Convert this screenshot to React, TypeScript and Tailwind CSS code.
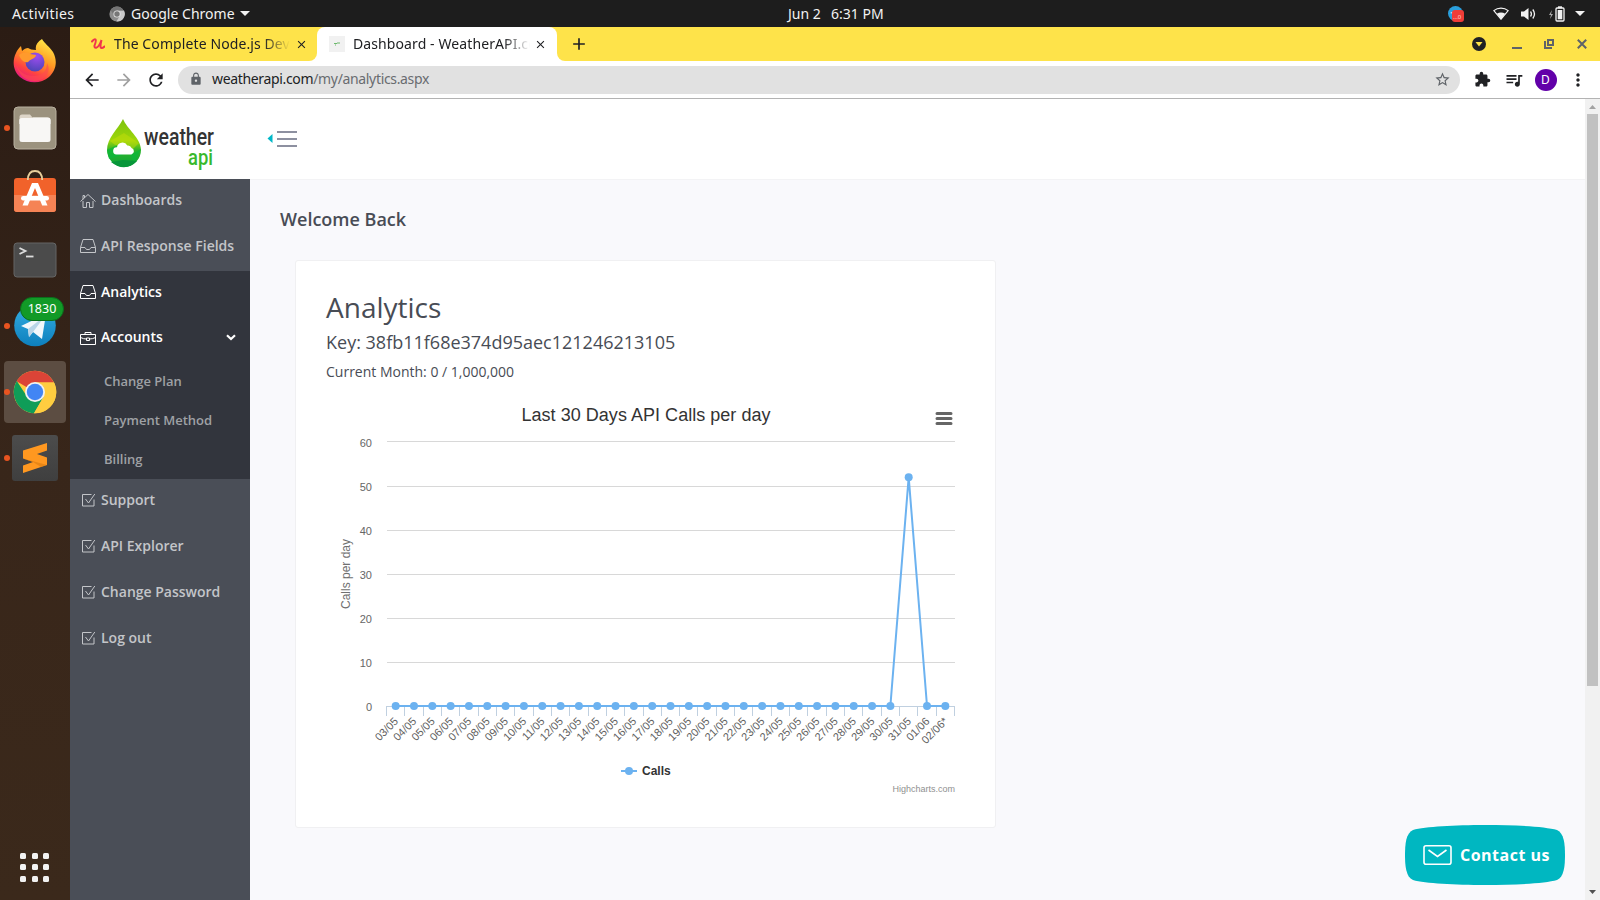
import type { ReactNode } from "react";
import {
  MdArrowBack,
  MdArrowForward,
  MdRefresh,
  MdLock,
  MdStarBorder,
  MdExtension,
  MdQueueMusic,
  MdMoreVert,
  MdClose,
  MdAdd,
} from "react-icons/md";

const ui = "font-['Noto_Sans',sans-serif]";

/* ---------- desktop top bar ---------- */

function TopBar() {
  return (
    <header className={`flex h-[27px] shrink-0 items-center bg-[#1d1d1d] text-[14px] text-[#f2f2f2] ${ui}`}>
      <div className="w-[109px] pl-3 tracking-[0.4px]">Activities</div>
      <svg width="16" height="16" viewBox="0 0 16 16">
        <circle cx="8" cy="8" r="7.6" fill="#8d8d8d" />
        <path d="M8 4.5h7a7.6 7.6 0 0 1-7.6 11L11 9.6z" fill="#c9c9c9" />
        <path d="M1.6 4A7.6 7.6 0 0 1 14.6 4.4H8L5 9.6z" fill="#747474" />
        <circle cx="8" cy="8" r="3.6" fill="#e4e4e4" />
        <circle cx="8" cy="8" r="2.7" fill="#777" />
      </svg>
      <div className="w-[115px] pl-[6px] tracking-[0.02px] whitespace-nowrap">Google Chrome</div>
      <svg width="10" height="5" viewBox="0 0 10 5" className="shrink-0">
        <path d="M0 0h10L5 5z" fill="#f2f2f2" />
      </svg>
      <div className="ml-[538px] w-[43px] whitespace-nowrap tracking-[0px]">Jun 2</div>
      <div className="w-[60px] whitespace-nowrap tracking-[0px]">6:31 PM</div>
      <div className="ml-auto flex items-center pr-[15px]">
        <svg width="16" height="16" viewBox="0 0 16 16" className="mr-[29px]">
          <circle cx="7.5" cy="7.5" r="7.5" fill="#2a9fdc" />
          <path d="M2 7l5-2v3z" fill="#fff" />
          <rect x="4" y="4" width="12" height="12" rx="3" fill="#f03d37" />
          <text x="5" y="13" fontSize="6" fill="#ffd0cc" fontFamily="Noto Sans, sans-serif">...0</text>
        </svg>
        <svg width="16" height="13" viewBox="0 0 16 13" className="mr-[12px]">
          <path d="M.8 3.6C5 .3 11 .3 15.200 3.600L8 12.200z" fill="none" stroke="#f2f2f2" strokeWidth="1.200" />
          <path d="M3.800 6.700c2.500-1.600 5.900-1.600 8.400 0L8 12z" fill="#f2f2f2" />
        </svg>
        <svg width="16" height="14" viewBox="0 0 16 14" className="mr-[12px]">
          <path d="M0 4.500h3L7.500 1v12L3 9.500H0z" fill="#f2f2f2" />
          <path d="M9.500 4.500q1.800 2.500 0 5M11.800 2.500q3.400 4.500 0 9" fill="none" stroke="#f2f2f2" strokeWidth="1.300" />
        </svg>
        <svg width="16" height="16" viewBox="0 0 16 16" className="mr-[10px]">
          <path d="M3 4L0 9h2l-1 4 3-5H2z" fill="#aaa" />
          <rect x="7" y="2" width="8" height="13" rx="1" fill="none" stroke="#f2f2f2" strokeWidth="1.300" />
          <rect x="9" y="0.300" width="4" height="2" fill="#f2f2f2" />
          <rect x="8.700" y="4" width="4.600" height="9.300" fill="#f2f2f2" />
        </svg>
        <svg width="10" height="5" viewBox="0 0 10 5">
          <path d="M0 0h10L5 5z" fill="#f2f2f2" />
        </svg>
      </div>
    </header>
  );
}

/* ---------- dock ---------- */

function DockSlot({ className, running, children }: { className: string; running?: boolean; children: ReactNode }) {
  return (
    <div className={`relative flex w-[70px] shrink-0 items-center justify-center ${className}`}>
      {running && <span className="absolute left-[4px] top-1/2 -mt-[3px] size-[6px] rounded-full bg-[#e95420]" />}
      {children}
    </div>
  );
}

function Dock() {
  return (
    <aside className="flex w-[70px] shrink-0 flex-col bg-linear-to-b from-[#2b1c14] via-[#38261a] to-[#3b291b]">
      <DockSlot className="h-[68px]">
        <svg width="44" height="46" viewBox="0 0 44 46">
          <defs>
            <linearGradient id="fx" x1="0.800" y1="0" x2="0.300" y2="1">
              <stop offset="0" stopColor="#fff04a" />
              <stop offset="0.450" stopColor="#ff9a23" />
              <stop offset="0.750" stopColor="#ff4440" />
              <stop offset="1" stopColor="#e31587" />
            </linearGradient>
            <radialGradient id="fxp" cx="0.600" cy="0.200" r="0.800">
              <stop offset="0" stopColor="#a04df0" />
              <stop offset="1" stopColor="#4f45b8" />
            </radialGradient>
          </defs>
          <path d="M29 1c2 4 8 8 11 13 5 9 3 19-4 25-8 7-21 7-29 0-7-6-8-16-4-24 1-3 3-5 5-7l1 5c2-2 4-3 6-3 2 1 4 2 8 2-1-4 1-8 6-11z" fill="url(#fx)" />
          <circle cx="22" cy="24" r="9.500" fill="url(#fxp)" />
          <path d="M6 17c4-3 8-3 11-1l6 1c0 3-5 4-7 6-1 2-3 1-4 1-3-1-5-4-6-7z" fill="#ff9a2c" />
          <path d="M3 24c2 10 9 14 18 14 8 0 13-5 13-13 5 9-2 18-13 18C11 43 4 35 3 24z" fill="#ff4a50" opacity="0.600" />
        </svg>
      </DockSlot>
      <DockSlot className="h-[66px]" running>
        <svg width="44" height="44" viewBox="0 0 44 44">
          <rect x="1" y="1" width="42" height="42" rx="4" fill="#9b927e" stroke="#b8b09f" />
          <path d="M6.500 11q0-2.500 2.500-2.500h8l2.500 3H34q3 0 3 3V18H6.500z" fill="#ddd5c8" />
          <rect x="6.500" y="12" width="31" height="24" rx="2.500" fill="#f8f7f5" />
          <path d="M6.500 13.500q0-1 2-1h8.500q2 0 3-1h15q2.500 0 2.500 2.500v4h-31z" fill="#f8f7f5" />
        </svg>
      </DockSlot>
      <DockSlot className="h-[66px]">
        <svg width="44" height="52" viewBox="0 0 44 52" className="-mt-[5px]">
          <rect x="1" y="12" width="42" height="34" rx="3" fill="#f1622b" />
          <path d="M1 29h42v14q0 3-3 3H4q-3 0-3-3z" fill="#f58355" />
          <path d="M14.800 14C15 8.500 17 5 22 5S29 8.500 29.200 14" fill="none" stroke="#e9cf9c" strokeWidth="1.800" />
          <path d="M19 17h6l9.500 22.500h-5.300L22 22l-7.200 17.500H9.500z" fill="#fff" />
          <rect x="8" y="30" width="28" height="4.500" rx="2.200" fill="#fff" />
        </svg>
      </DockSlot>
      <DockSlot className="h-[66px]">
        <svg width="44" height="36" viewBox="0 0 44 36">
          <rect x="1" y="1" width="42" height="34" rx="3" fill="#4b4b4b" stroke="#656565" />
          <path d="M6.500 6l6 3-6 3" fill="none" stroke="#ddd" strokeWidth="1.800" />
          <path d="M13 14.500h7.500" stroke="#ddd" strokeWidth="1.800" />
        </svg>
      </DockSlot>
      <DockSlot className="h-[66px]" running>
        <svg width="44" height="44" viewBox="0 0 44 44">
          <defs>
            <linearGradient id="tg" x1="0" y1="0" x2="0" y2="1">
              <stop offset="0" stopColor="#35aee2" />
              <stop offset="1" stopColor="#0d7fbd" />
            </linearGradient>
          </defs>
          <circle cx="22" cy="21.500" r="20.800" fill="url(#tg)" />
          <path d="M8 22L33 10l-4 25-9-7-4 5-1-8z" fill="#f2f7fb" />
          <path d="M15 25l17-13-12 16-4 5z" fill="#b9d5e8" />
        </svg>
        <span className={`absolute left-[20px] top-[4px] flex h-[24px] w-[44px] items-center justify-center rounded-full border border-[#0a6f1c] bg-[#129a27] pt-px text-[12.500px] text-white ${ui}`}>
          1830
        </span>
      </DockSlot>
      <DockSlot className="h-[66px]" running>
        <div className="flex size-[62px] items-center justify-center rounded-[4px] bg-[#5c4d42]">
          <svg width="44" height="44" viewBox="0 0 44 44">
            <circle cx="22" cy="22" r="21.300" fill="#ffcd40" />
            <path d="M22 22L3.550 11.350A21.300 21.300 0 0 1 41 12.500H22z" fill="#db4437" />
            <path d="M3.800 11A21.300 21.300 0 0 0 21 43.200L30.500 27 22 22 13 25z" fill="#0f9d58" />
            <path d="M22 12.500H41A21.300 21.300 0 0 1 21 43.300L30.500 27z" fill="#ffcd40" />
            <circle cx="22" cy="22" r="10" fill="#f1f1f1" />
            <circle cx="22" cy="22" r="8.200" fill="#4285f4" />
          </svg>
        </div>
      </DockSlot>
      <DockSlot className="h-[66px]" running>
        <div className="flex size-[46px] items-center justify-center rounded-[3px] bg-linear-to-b from-[#4c4c4c] to-[#3f3f3f]">
          <svg width="24" height="30" viewBox="0 0 24 30">
            <path d="M0 7.500L24 0v7.500L14 11l10 3.500V22L0 30v-7.500L10 19 0 15.500z" fill="#ff9820" />
            <path d="M0 15.500L24 22l-6 2L10 19z" fill="#d87a10" opacity="0.600" />
          </svg>
        </div>
      </DockSlot>
      <div className="mt-auto grid grid-cols-[6px_6px_6px] justify-center gap-[5.500px] pb-[18.500px] pr-px">
        {Array.from({ length: 9 }, (_, i) => (
          <span key={i} className="size-[6px] rounded-[1.500px] bg-[#f2f2f2]" />
        ))}
      </div>
    </aside>
  );
}

/* ---------- browser chrome ---------- */

function TabStrip() {
  return (
    <div className={`flex h-[34px] shrink-0 items-center bg-white text-[14px] text-[#202124] ${ui}`}>
      <div className="flex h-full w-[247px] items-center rounded-br-[8px] bg-[#fee34a]">
        <svg width="14" height="12" viewBox="0 0 14 12" className="ml-[21px] shrink-0">
          <path d="M1 3.500Q3.500 .5 4.500 1.500T3.500 7.500Q3.200 10 5.200 9.700Q8 9 10.500 2Q8.500 10 10.500 10Q12 10 13.500 8.500" fill="none" stroke="#f0364b" strokeWidth="2" strokeLinecap="round" />
        </svg>
        <div className="ml-[9px] w-[176px] overflow-hidden whitespace-nowrap tracking-[0.1px] mask-r-from-85% mask-r-to-100% pb-px">The Complete Node.js Developer</div>
        <MdClose className="ml-[5px] shrink-0 text-[13px] text-[#202124]" stroke="currentColor" />
      </div>
      <div className="h-full bg-[#fee34a]">
        <div className="flex h-full w-[240px] items-center rounded-t-[8px] bg-white">
          <span className="ml-[12px] flex size-[16px] shrink-0 items-center justify-center bg-[#f1f1f1]">
            <svg width="6" height="4" viewBox="0 0 6 4">
              <path d="M0 1.500h3M3 1h3M1 3h1" stroke="#6cb86c" />
            </svg>
          </span>
          <div className="ml-[8px] w-[177px] overflow-hidden whitespace-nowrap tracking-[0.1px] mask-r-from-85% mask-r-to-100% pb-px">Dashboard - WeatherAPI.com</div>
          <MdClose className="ml-[4px] shrink-0 text-[13px] text-[#202124]" stroke="currentColor" />
        </div>
      </div>
      <div className="flex h-full flex-1 items-center rounded-bl-[8px] bg-[#fee34a]">
        <MdAdd className="ml-[12px] text-[20px]" />
        <div className="ml-auto flex items-center pr-[13px] text-[#5f6368]">
          <svg width="14" height="14" viewBox="0 0 14 14" className="mr-[26px]">
            <circle cx="7" cy="7" r="7" fill="#202124" />
            <path d="M3.500 5h7L7 9.500z" fill="#fee34a" />
          </svg>
          <svg width="10" height="10" viewBox="0 0 10 10" className="mr-[22px]">
            <path d="M0 9h10" stroke="#5f6368" strokeWidth="2" />
          </svg>
          <svg width="10" height="10" viewBox="0 0 10 10" className="mr-[23px]">
            <path d="M4 1h5v5H4z M1 2v7h7" fill="none" stroke="#5f6368" strokeWidth="2" />
          </svg>
          <svg width="10" height="10" viewBox="0 0 10 10">
            <path d="M.8.8l8.400 8.400M9.200.8L.8 9.200" stroke="#5f6368" strokeWidth="2" />
          </svg>
        </div>
      </div>
    </div>
  );
}

function Toolbar() {
  return (
    <div className="flex h-[38px] shrink-0 items-center border-b border-[#b3b3b3] bg-white pl-[12px] text-[#202124]">
      <MdArrowBack className="text-[20px]" />
      <MdArrowForward className="ml-[12px] text-[20px] text-[#a0a0a0]" />
      <MdRefresh className="ml-[12px] text-[20px]" />
      <div className={`ml-[12px] flex h-[28px] w-[1282px] shrink-0 items-center rounded-full bg-[#e1e1e1] pl-[11px] pr-[9px] text-[14px] ${ui}`}>
        <MdLock className="mb-px text-[14px] text-[#5f6368]" />
        <div className="ml-[9px] pb-[2px] tracking-[-0.34px]">
          weatherapi.com<span className="text-[#696c70]">/my/analytics.aspx</span>
        </div>
        <MdStarBorder className="ml-auto text-[17px] text-[#5f6368]" />
      </div>
      <MdExtension className="ml-[13.500px] shrink-0 text-[17px]" />
      <MdQueueMusic className="ml-[13px] shrink-0 text-[20px]" />
      <span className={`ml-[11px] flex size-[22px] shrink-0 items-center justify-center rounded-full bg-[#6200a9] text-[12px] text-white ${ui}`}>D</span>
      <MdMoreVert className="ml-[11.500px] shrink-0 text-[20px]" />
    </div>
  );
}

/* ---------- site ---------- */

function Logo() {
  return (
    <svg width="112" height="54" viewBox="0 0 112 54">
      <defs>
        <linearGradient id="drop" x1="0" y1="0" x2="0" y2="1">
          <stop offset="0" stopColor="#7cc30d" />
          <stop offset="0.450" stopColor="#9ed60a" />
          <stop offset="0.650" stopColor="#2fb32a" />
          <stop offset="1" stopColor="#08a53a" />
        </linearGradient>
      </defs>
      <path d="M16 1C11 11 0 20 0 32a17 17 0 0 0 34 0C34 20 20 11 16 1z" fill="url(#drop)" />
      <path d="M3 23l14-8 15 10-8 8-12-3z" fill="#c3de0a" opacity="0.500" />
      <path d="M0 32l10-5 6 10-14 4zM34 31l-11 6 4 8z" fill="#08b83a" opacity="0.700" />
      <path d="M4 44l12-2 14 1q-12 12-26 1z" fill="#07963a" />
      <path d="M9.500 36.500a3.600 3.600 0 0 1 .5-7.200 5.500 5.500 0 0 1 10.300-1.800 4 4 0 0 1 4.300 2.500 3.400 3.400 0 0 1-.2 6.500z" fill="#fff" />
      <text x="37" y="26.500" fontSize="23" fontWeight="500" fill="#333" fontFamily="Roboto, sans-serif" textLength="70" lengthAdjust="spacingAndGlyphs">weather</text>
      <text x="81" y="46.500" fontSize="22" fontWeight="500" fill="#38b92c" fontFamily="Roboto, sans-serif" textLength="25" lengthAdjust="spacingAndGlyphs">api</text>
    </svg>
  );
}

function SiteHeader() {
  return (
    <div className="flex h-[80px] shrink-0 bg-white">
      <div className="w-[180px] pl-[37px] pt-[19px]">
        <Logo />
      </div>
      <svg width="30" height="18" viewBox="0 0 30 18" className="ml-[17px] mt-[31px]">
        <path d="M5.500 4v9L0.500 8.500z" fill="#00b8c8" />
        <path d="M10 2h20M10 9h20M10 16h20" stroke="#8d90a0" strokeWidth="2" />
      </svg>
    </div>
  );
}

type IconKind = "home" | "inbox" | "case" | "check";

const iconPaths: Record<IconKind, string> = {
  home: "M.5 8.500L8 1.500l7.500 7M3 6.500V2.500h1.500v2.500M3 8v6.500h3.500v-5h3v5H13V8",
  inbox: "M.5 9.500L3 1.500h10l2.500 8v5H.5zM.5 9.500H5l1.500 2h3l1.500-2h4.500",
  case: "M.5 4.500h15v10H.5zM5 4.500V2.500h6v2M.5 7.500q3 1.500 6 1.500M15.500 7.500q-3 1.500-6 1.500M6.500 8h3v2.500h-3z",
  check: "M11.500 2.500H2.500v11.500h11.500V7.500M5.500 7l3 4L14.800 2",
};

const iconOffset: Record<IconKind, string> = {
  home: "pt-[2px]",
  inbox: "",
  case: "pt-[2px]",
  check: "",
};

function NavIcon({ kind }: { kind: IconKind }) {
  return (
    <svg width="16" height="16" viewBox="0 0 16 16" className="shrink-0" fill="none" stroke="currentColor" strokeWidth="1">
      <path d={iconPaths[kind]} />
    </svg>
  );
}

function NavItem({ kind, label, active, open }: { kind: IconKind; label: string; active?: boolean; open?: boolean }) {
  return (
    <a
      className={`flex items-center gap-[5px] pb-[5px] pl-[10px] pr-[14px] text-[14px] font-semibold ${
        active ? "bg-[#32353d] text-white" : "text-[#c3c5c9]"
      } ${open ? "h-[45px]" : "h-[46px]"}`}
    >
      <span className={iconOffset[kind]}>
        <NavIcon kind={kind} />
      </span>
      <span className={`whitespace-nowrap ${open ? "pb-px" : ""}`}>{label}</span>
      {open && (
        <svg width="10" height="7" viewBox="0 0 10 7" className="ml-auto mt-px">
          <path d="M1 1.300l4 3.700 4-3.700" fill="none" stroke="#fff" strokeWidth="2.200" />
        </svg>
      )}
    </a>
  );
}

function Sidebar() {
  return (
    <nav className="w-[180px] shrink-0 bg-[#4a4e57] font-['Open_Sans',sans-serif]">
      <NavItem kind="home" label="Dashboards" />
      <NavItem kind="inbox" label="API Response Fields" />
      <NavItem kind="inbox" label="Analytics" active />
      <NavItem kind="case" label="Accounts" active open />
      <div className="bg-[#32353d] text-[13px] font-semibold text-[#9fa1a5]">
        {["Change Plan", "Payment Method", "Billing"].map((t) => (
          <a key={t} className="flex h-[39px] items-center pl-[34px]">
            {t}
          </a>
        ))}
      </div>
      <NavItem kind="check" label="Support" />
      <NavItem kind="check" label="API Explorer" />
      <NavItem kind="check" label="Change Password" />
      <NavItem kind="check" label="Log out" />
    </nav>
  );
}

/* ---------- chart ---------- */

const calls = Array.from({ length: 31 }, (_, i) => ({
  day: i < 29 ? `${String(i + 3).padStart(2, "0")}/05` : i === 29 ? "01/06" : "02/06*",
  value: i === 28 ? 52 : 0,
}));

const left = 60.5;
const step = 568 / 31;
const gridY = [308.5, 264.5, 220.5, 176.5, 132.5, 88.5, 43.5];
const px = (i: number) => left + step * (i + 0.5);
const py = (v: number) => 308 - (v * 264) / 60;

function CallsChart() {
  return (
    <svg width="640" height="400" viewBox="0 0 640 400" className="block" fontFamily="'Liberation Sans', Arial, sans-serif">
      <text x="320" y="23" textAnchor="middle" fontSize="18" fill="#333" textLength="249">
        Last 30 Days API Calls per day
      </text>
      <path d="M611 15.500h14M611 20.500h14M611 25.500h14" stroke="#666" strokeWidth="3" strokeLinecap="round" />
      {gridY.map((y, i) => (
        <g key={y}>
          {i > 0 && <path d={`M61 ${y}H629`} stroke="#d8d8d8" />}
          <text x="46" y={i === 6 ? 49 : y + 4} textAnchor="end" fontSize="11" fill="#666">
            {i * 10}
          </text>
        </g>
      ))}
      <path d="M60 308.500H629" stroke="#c0d0e0" />
      {Array.from({ length: 32 }, (_, i) => (
        <path key={i} d={`M${Math.round(left + step * i - 0.5) + 0.5} 308V318`} stroke="#c0d0e0" />
      ))}
      <text transform="translate(24 176) rotate(-90)" textAnchor="middle" fontSize="12" fill="#707070">
        Calls per day
      </text>
      <polyline points={calls.map((c, i) => `${px(i)},${py(c.value)}`).join(" ")} fill="none" stroke="#6cb2f0" strokeWidth="2" strokeLinejoin="round" />
      {calls.map((c, i) => (
        <g key={c.day}>
          <circle cx={px(i)} cy={py(c.value)} r="4" fill="#6cb2f0" />
          <text transform={`translate(${px(i) + 3.2} 324) rotate(-45)`} textAnchor="end" fontSize="11" fill="#606060">
            {c.day}
          </text>
        </g>
      ))}
      <path d="M295 373h16" stroke="#6cb2f0" strokeWidth="2" />
      <circle cx="303" cy="373" r="4" fill="#6cb2f0" />
      <text x="316" y="377" fontSize="12" fontWeight="bold" fill="#333">
        Calls
      </text>
      <text x="629" y="394" textAnchor="end" fontSize="9" fill="#909090">
        Highcharts.com
      </text>
    </svg>
  );
}

function ContactButton() {
  return (
    <button className="absolute bottom-[15px] right-[20px] flex h-[60px] w-[160px] items-center text-[16px] font-bold tracking-[0.5px] text-white font-['Open_Sans',sans-serif]">
      <svg width="160" height="60" viewBox="0 0 160 60" className="absolute inset-0">
        <path d="M8 5C20 1.500 50 0 80 0s60 1.500 72 5c7 3 8 14 8 25s-1 22-8 25c-12 3.500-42 5-72 5S20 58.500 8 55C1 52 0 41 0 30S1 8 8 5z" fill="#00b7c1" />
        <rect x="19" y="20.800" width="27" height="18.500" rx="2" fill="none" stroke="#fff" strokeWidth="1.600" />
        <path d="M23.500 25l9 6.500 9-6.500" fill="none" stroke="#fff" strokeWidth="1.600" />
      </svg>
      <span className="relative pl-[55px] whitespace-nowrap">Contact us</span>
    </button>
  );
}

function Scrollbar() {
  return (
    <div className="flex w-[15px] shrink-0 flex-col items-center bg-[#f1f1f1]">
      <svg width="7" height="4" viewBox="0 0 7 4" className="mt-[6px]">
        <path d="M0 4h7L3.500 0z" fill="#a3a3a3" />
      </svg>
      <div className="mt-[5px] h-[572px] w-[11px] bg-[#c1c1c1]" />
      <svg width="7" height="4" viewBox="0 0 7 4" className="mb-[6px] mt-auto">
        <path d="M0 0h7L3.500 4z" fill="#505050" />
      </svg>
    </div>
  );
}

export default function App() {
  return (
    <div className="flex h-[900px] w-[1600px] flex-col overflow-hidden">
      <TopBar />
      <div className="flex min-h-0 flex-1">
        <Dock />
        <div className="flex min-w-0 flex-1 flex-col">
          <TabStrip />
          <Toolbar />
          <div className="relative flex min-h-0 flex-1">
            <div className="relative flex min-w-0 flex-1 flex-col">
              <SiteHeader />
              <div className="flex min-h-0 flex-1">
                <Sidebar />
                <main className="flex-1 border-t border-[#f3f3f5] bg-[#f9f9fc] pl-[30px] pt-[26px] font-['Open_Sans',sans-serif] text-[#484c55]">
                  <h1 className="text-[18px] leading-[27px] font-semibold">Welcome Back</h1>
                  <section className="ml-[15px] mt-[27px] h-[568px] w-[701px] rounded-[3px] border border-[#f0f0f2] bg-white px-[30px] pt-[29px]">
                    <h2 className="text-[28px] leading-[34px]">Analytics</h2>
                    <p className="mt-[2px] text-[18px] leading-[32px]">Key: 38fb11f68e374d95aec121246213105</p>
                    <p className="mb-[12px] text-[14px] leading-[28px]">Current Month: 0 / 1,000,000</p>
                    <CallsChart />
                  </section>
                </main>
              </div>
              <ContactButton />
            </div>
            <Scrollbar />
          </div>
        </div>
      </div>
    </div>
  );
}
